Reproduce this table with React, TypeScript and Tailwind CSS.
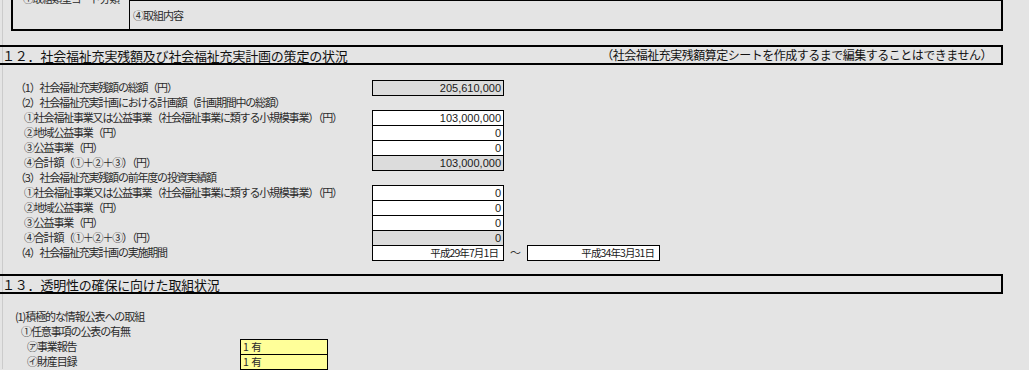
import type { ReactNode } from 'react';

type Row = { label: string; value: string; locked?: boolean; indent?: boolean };

const PLAN: Row[] = [
  { label: '①社会福祉事業又は公益事業（社会福祉事業に類する小規模事業）（円）', value: '103,000,000', indent: true },
  { label: '②地域公益事業（円）', value: '0', indent: true },
  { label: '③公益事業（円）', value: '0', indent: true },
  { label: '④合計額（①＋②＋③）（円）', value: '103,000,000', locked: true, indent: true },
];

const RESULTS: Row[] = [
  { label: '①社会福祉事業又は公益事業（社会福祉事業に類する小規模事業）（円）', value: '0', indent: true },
  { label: '②地域公益事業（円）', value: '0', indent: true },
  { label: '③公益事業（円）', value: '0', indent: true },
  { label: '④合計額（①＋②＋③）（円）', value: '0', locked: true, indent: true },
];

const DISCLOSURE = [
  { label: '㋐事業報告', value: '1 有' },
  { label: '㋑財産目録', value: '1 有' },
];

function SectionHeader({ title, note }: { title: string; note?: string }) {
  return (
    <div className="-ml-[3px] w-[1003px] h-[20px] box-border border-t-2 border-b-2 border-r-2 border-black flex items-center justify-between pl-[2px] pr-[9px] text-[#111]">
      <span className="text-[13px] tracking-[-0.2px] leading-none">{title}</span>
      {note && <span className="text-[12px] tracking-[-0.5px] leading-none">{note}</span>}
    </div>
  );
}

function Label({ children, indent }: { children: ReactNode; indent?: boolean }) {
  return (
    <span className={`${indent ? 'pl-[21px]' : 'pl-[12px]'} text-[11px] tracking-[-1.2px] leading-[15px] text-[#2b2b2b] whitespace-nowrap`}>
      {children}
    </span>
  );
}

function ValueCell({ value, locked, width = 'w-[132px]', pad = 'pr-[2px]', num = true }: { value: string; locked?: boolean; width?: string; pad?: string; num?: boolean }) {
  return (
    <div
      className={`${width} h-[16px] shrink-0 self-start box-border border border-black flex items-center justify-end ${pad} ${
        locked ? 'bg-[#dcdcdc]' : 'bg-white'
      }`}
    >
      <span
        className={`leading-none text-[#1a1a1a] ${
          num ? "font-['Liberation_Sans',sans-serif] text-[11px]" : 'text-[10.5px] tracking-[-0.9px]'
        }`}
      >
        {value}
      </span>
    </div>
  );
}

function AmountRow({ row }: { row: Row }) {
  return (
    <div className="h-[15px] flex">
      <div className="w-[369px] shrink-0 flex items-center">
        <Label indent={row.indent}>{row.label}</Label>
      </div>
      <ValueCell value={row.value} locked={row.locked} />
    </div>
  );
}

export default function App() {
  return (
    <div className="w-[1029px] h-[370px] overflow-hidden bg-[#e4e4e4] font-['Noto_Sans_CJK_JP',sans-serif]">
      <div className="ml-[2px] min-h-full border-l border-[#cbcbcb]">
        {/* tail of the item 11 table */}
        <div className="-mt-[18px] ml-[8px] w-[992px] box-border border-2 border-black flex">
          <div className="w-[117px] shrink-0 border-r border-black pt-[7px] text-center text-[10.5px] tracking-[-0.9px] leading-[15px] text-[#2b2b2b]">
            ①取組類型コード分類
          </div>
          <div className="flex-1 flex flex-col">
            <div className="h-[17px] border-b border-black" />
            <div className="h-[28px] flex items-center pl-[3px]">
              <span className="text-[11px] tracking-[-1px] leading-[15px] text-[#2b2b2b]">④取組内容</span>
            </div>
          </div>
        </div>

        {/* 12 */}
        <div className="mt-[14px]">
          <SectionHeader
            title="１２．社会福祉充実残額及び社会福祉充実計画の策定の状況"
            note="（社会福祉充実残額算定シートを作成するまで編集することはできません）"
          />
        </div>

        <div className="mt-[15px]">
          <AmountRow row={{ label: '（1）社会福祉充実残額の総額（円）', value: '205,610,000', locked: true }} />
          <div className="h-[15px] flex items-center">
            <Label>（2）社会福祉充実計画における計画額（計画期間中の総額）</Label>
          </div>
          {PLAN.map((r, i) => (
            <AmountRow key={`p${i}`} row={r} />
          ))}
          <div className="h-[15px] flex items-center">
            <Label>（3）社会福祉充実残額の前年度の投資実績額</Label>
          </div>
          {RESULTS.map((r, i) => (
            <AmountRow key={`r${i}`} row={r} />
          ))}
          <div className="h-[15px] flex">
            <div className="w-[369px] shrink-0 flex items-center">
              <Label>（4）社会福祉充実計画の実施期間</Label>
            </div>
            <ValueCell value="平成29年7月1日" num={false} pad="pr-[5px]" />
            <div className="w-[23px] shrink-0 flex items-center justify-center text-[11px] leading-none text-[#333]">～</div>
            <ValueCell value="平成34年3月31日" num={false} pad="pr-[5px]" width="w-[133px]" />
          </div>
        </div>

        {/* 13 */}
        <div className="mt-[14px]">
          <SectionHeader title="１３．透明性の確保に向けた取組状況" />
        </div>

        <div className="mt-[15px]">
          <div className="h-[15px] flex items-center">
            <span className="pl-[12px] text-[11px] tracking-[-1.1px] leading-[15px] text-[#2b2b2b]">(1)積極的な情報公表への取組</span>
          </div>
          <div className="h-[15px] flex items-center">
            <span className="pl-[18px] text-[11px] tracking-[-1.1px] leading-[15px] text-[#2b2b2b]">①任意事項の公表の有無</span>
          </div>
          {DISCLOSURE.map((d) => (
            <div key={d.label} className="h-[15px] flex">
              <div className="w-[237px] shrink-0 flex items-center">
                <span className="pl-[24px] text-[11px] tracking-[-1.1px] leading-[15px] text-[#2b2b2b]">{d.label}</span>
              </div>
              <div className="w-[88px] h-[16px] self-start box-border border border-black bg-[#ffff99] flex items-center pl-[2px]">
                <span className="text-[10.5px] leading-none text-[#2b2b2b] whitespace-pre">{d.value}</span>
              </div>
            </div>
          ))}
        </div>
      </div>
    </div>
  );
}
